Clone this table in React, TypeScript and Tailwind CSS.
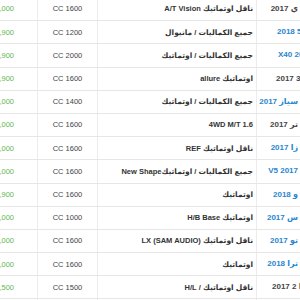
type Row = {
  price: string;
  cc: string;
  desc: string;
  name: string;
  rtl: boolean;
  blue: boolean;
  start?: string;
};

// name strings are logical order; rtl rows render right-to-left
const rows: Row[] = [
  { price: "11,000", cc: "CC 1600", desc: "ناقل اوتماتيك A/T Vision", name: "ي 2017", rtl: true, blue: false },
  { price: "14,900", cc: "CC 1200", desc: "جميع الكماليات / مانيوال", name: "2018 5", rtl: false, blue: true, start: "pl-[20px]" },
  { price: "16,900", cc: "CC 2000", desc: "جميع الكماليات / اوتماتيك", name: "X40 2018", rtl: false, blue: true, start: "pl-[21px]" },
  { price: "18,900", cc: "CC 1600", desc: "اوتماتيك allure", name: "2017 3008", rtl: false, blue: false, start: "pl-[19px]" },
  { price: "11,000", cc: "CC 1400", desc: "جميع الكماليات / اوتماتيك", name: "سياز 2017", rtl: true, blue: true },
  { price: "17,000", cc: "CC 1600", desc: "4WD M/T 1.6", name: "تر 2017", rtl: true, blue: false },
  { price: "12,000", cc: "CC 1600", desc: "ناقل اوتماتيك REF", name: "زا 2017", rtl: true, blue: true },
  { price: "13,000", cc: "CC 1600", desc: "جميع الكماليات / اوتماتيكNew Shape", name: "V5 2017", rtl: false, blue: true },
  { price: "12,900", cc: "CC 1600", desc: "اوتماتيك", name: "و 2018", rtl: true, blue: true },
  { price: "10,000", cc: "CC 1000", desc: "اوتماتيك H/B Base", name: "س 2017", rtl: true, blue: true },
  { price: "13,000", cc: "CC 1600", desc: "ناقل اوتماتيك LX (SAM AUDIO)", name: "تو 2017", rtl: true, blue: true },
  { price: "14,000", cc: "CC 1600", desc: "اوتماتيك", name: "ترا 2018", rtl: true, blue: true },
  { price: "11,500", cc: "CC 1500", desc: "ناقل اوتماتيك / H/L", name: "2017 2 مازدا", rtl: false, blue: false, start: "pl-[15px]" },
  { price: "12,000", cc: "CC 1600", desc: "اوتماتيك", name: "2018", rtl: false, blue: false, start: "pl-[18px]" },
];

export default function App() {
  return (
    <div className="w-[300px] h-[300px] overflow-hidden bg-white font-['Liberation_Sans','DejaVu_Sans',sans-serif] text-[#333]">
      <div className="-mt-[2px] -ml-[63px] w-[500px]">
        {rows.map((r, i) => (
          <div key={i} className="flex h-[23.2px] border-b border-[#e6e6e6]">
            <div className="w-[101px] shrink-0 border-r border-[#ececec] flex items-center justify-end pr-[23px] text-[7.5px] text-[#5fb84a]">
              {r.price}
            </div>
            <div className="w-[60px] shrink-0 border-r border-[#ececec] flex items-center justify-center text-[7.5px] text-[#444]">
              {r.cc}
            </div>
            <div
              dir="rtl"
              className="w-[159px] shrink-0 border-r border-[#ececec] flex items-center pr-[3px] whitespace-nowrap text-[7.5px] font-bold text-[#333]"
            >
              {r.desc}
            </div>
            <div
              className={
                "w-[41px] shrink-0 flex items-center whitespace-nowrap text-[8px] font-bold " +
                (r.start ? "justify-start " + r.start : "justify-end") +
                (r.blue ? " text-[#2a86cf]" : " text-[#444]")
              }
            >
              <span dir={r.rtl ? "rtl" : "ltr"}>{r.name}</span>
            </div>
          </div>
        ))}
      </div>
    </div>
  );
}
